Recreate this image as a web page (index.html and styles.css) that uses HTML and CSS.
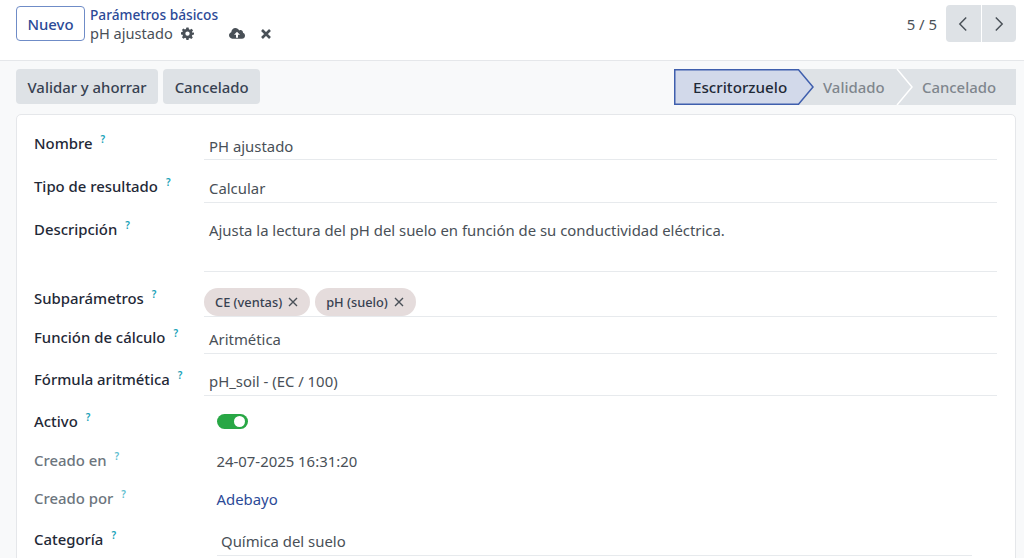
FILE: index.html
```html
<!DOCTYPE html>
<html lang="es">
<head>
<meta charset="utf-8">
<title>PH ajustado</title>
<link rel="stylesheet" href="styles.css">
</head>
<body>
<header class="topbar">
  <div class="top-left">
    <button class="btn-new">Nuevo</button>
    <div class="crumbs">
      <a class="crumb-link">Parámetros básicos</a>
      <div class="crumb-current">
        <span>pH ajustado</span>
        <svg class="ic ic-gear" viewBox="0 0 24 24"><path fill-rule="evenodd" d="M10 1h4l.7 3.2 1.9.8 2.8-1.8 2.8 2.8-1.8 2.8.8 1.9L24 10v4l-3.2.7-.8 1.9 1.8 2.8-2.8 2.8-2.8-1.8-1.9.8L14 24h-4l-.7-3.2-1.9-.8-2.8 1.8-2.8-2.8 1.8-2.8-.8-1.9L-.6 14v-4l3.2-.7.8-1.9L1.6 5.6l2.8-2.8 2.8 1.8 1.9-.8L10 1zm2 7.2a4 4 0 1 0 0 8 4 4 0 0 0 0-8z"/></svg>
        <svg class="ic ic-cloud" viewBox="0 0 24 18"><path fill-rule="evenodd" d="M9.5 0c2.6 0 4.8 1.4 5.9 3.6.6-.4 1.3-.6 2-.6 2 0 3.6 1.6 3.6 3.600l0 .7c1.800.6 3 2.300 3 4.200 0 2.500-2 4.500-4.500 4.500H5c-2.800 0-5-2.200-5-5 0-2.200 1.400-4.100 3.400-4.700C3.700 2.800 6.300 0 9.500 0zM12 5.500 7.500 10H10.500v4.500h3V10H16.500L12 5.500z"/></svg>
        <svg class="ic ic-x" viewBox="0 0 12 12"><path d="M2 2l8 8M10 2l-8 8"/></svg>
      </div>
    </div>
  </div>
  <div class="pager">
    <span class="pager-count">5 / 5</span>
    <div class="pager-btns">
      <button class="pager-btn"><svg viewBox="0 0 12 20"><path d="M10 2 2 10l8 8"/></svg></button>
      <button class="pager-btn"><svg viewBox="0 0 12 20"><path d="M2 2l8 8-8 8"/></svg></button>
    </div>
  </div>
</header>

<div class="statusbar">
  <div class="actions">
    <button class="btn-grey">Validar y ahorrar</button>
    <button class="btn-grey">Cancelado</button>
  </div>
  <svg class="steps-bg" viewBox="0 0 342 36" width="342" height="36">
    <path class="s-grey" d="M120 0H342V36H120l17-18z"/>
    <path class="s-sep" d="M223 0l15 18L223 36"/>
    <path class="s-on" d="M.75.750H124.500L139 18 124.500 35.250H.75z"/>
  </svg>
  <div class="steps">
    <span class="step step-on">Escritorzuelo</span>
    <span class="step step-2">Validado</span>
    <span class="step step-3">Cancelado</span>
  </div>
</div>

<main class="sheet">
  <div class="row r1"><div class="lab">Nombre<sup>?</sup></div><div class="val">PH ajustado</div></div>
  <div class="row r2"><div class="lab">Tipo de resultado<sup>?</sup></div><div class="val">Calcular</div></div>
  <div class="row r3"><div class="lab">Descripción<sup>?</sup></div><div class="val">Ajusta la lectura del pH del suelo en función de su conductividad eléctrica.</div></div>
  <div class="row r4"><div class="lab">Subparámetros<sup>?</sup></div>
    <div class="val tags">
      <span class="tag">CE (ventas)<svg viewBox="0 0 10 10"><path d="M1 1l8 8M9 1l-8 8"/></svg></span>
      <span class="tag">pH (suelo)<svg viewBox="0 0 10 10"><path d="M1 1l8 8M9 1l-8 8"/></svg></span>
    </div>
  </div>
  <div class="row r5"><div class="lab">Función de cálculo<sup>?</sup></div><div class="val">Aritmética</div></div>
  <div class="row r6"><div class="lab">Fórmula aritmética<sup>?</sup></div><div class="val">pH_soil - (EC / 100)</div></div>
  <div class="row r7"><div class="lab">Activo<sup>?</sup></div><div class="plain"><span class="toggle"><span class="knob"></span></span></div></div>
  <div class="row r8"><div class="lab muted">Creado en<sup>?</sup></div><div class="plain">24-07-2025 16:31:20</div></div>
  <div class="row r9"><div class="lab muted">Creado por<sup>?</sup></div><div class="plain link">Adebayo</div></div>
  <div class="row r10"><div class="lab">Categoría<sup>?</sup></div><div class="cat">Química del suelo</div></div>
</main>
</body>
</html>
```

FILE: styles.css
```css
* { box-sizing: border-box; }
html, body { margin: 0; height: 558px; overflow: hidden; }
body {
  background: #f8f9fa;
  color: #495057;
  font-family: "Noto Sans", "Open Sans", sans-serif;
  font-size: 14.9px;
}
button { font: inherit; cursor: pointer; }

.topbar {
  height: 61px;
  background: #fff;
  border-bottom: 1px solid #e5e7ea;
  padding: 5px 8px 0 16px;
  display: flex;
  justify-content: space-between;
  align-items: flex-start;
}
.top-left { display: flex; gap: 5px; }
.btn-new {
  width: 69px; height: 35px; margin-top: 1px;
  background: #fff;
  border: 1px solid #6f8cc7;
  border-radius: 4px;
  color: #2c4a97;
  font-weight: 500;
  padding: 0;
}
.crumbs { display: flex; flex-direction: column; line-height: 19px; }
.crumb-link { color: #2c4a97; font-weight: 500; font-size: 13.7px; }
.crumb-current { display: flex; align-items: center; height: 19px; color: #495057; font-size: 14.6px; }
.ic { display: block; fill: #495057; }
.ic-gear { width: 13px; height: 13px; margin-left: 8px; }
.ic-cloud { width: 16px; height: 12px; margin-left: 35px; }
.ic-x { width: 12px; height: 12px; margin-left: 15px; fill: none; stroke: #495057; stroke-width: 2.6; }

.pager { display: flex; align-items: center; gap: 9px; height: 37px; }
.pager-btns { display: flex; gap: 1px; }
.pager-btn {
  width: 34.5px; height: 37px; padding: 0;
  background: #dee2e6; border: 0;
  display: flex; align-items: center; justify-content: center;
}
.pager-btn:first-child { border-radius: 4px 0 0 4px; }
.pager-btn:last-child { border-radius: 0 4px 4px 0; }
.pager-btn svg { width: 10px; height: 16px; fill: none; stroke: #495057; stroke-width: 1.800; }

.statusbar {
  position: relative;
  height: 53px;
  padding: 8px 16px 0;
  display: flex;
  justify-content: space-between;
  align-items: flex-start;
}
.actions { display: flex; gap: 5px; }
.btn-grey {
  height: 35px; padding: 0 11.5px;
  background: #dee2e6; border: 0; border-radius: 4px;
  color: #374151; font-weight: 500;
}
.steps-bg { position: absolute; left: 674px; top: 8px; }
.s-grey { fill: #dee2e6; }
.s-sep { fill: none; stroke: #fff; stroke-width: 1.500; }
.s-on { fill: #d2d9ea; stroke: #3f5fad; stroke-width: 1.500; }
.steps { position: absolute; left: 674px; top: 8px; width: 342px; height: 35px; }
.step { position: absolute; top: 0; line-height: 36px; font-weight: 500; color: #7f868d; }
.step-on { left: 19px; color: #1f2937; font-size: 15.2px; }
.step-2 { left: 149px; }
.step-3 { left: 248px; }

.sheet {
  margin: 0 0 0 16px;
  width: 1000px;
  height: 460px;
  background: #fff;
  border: 1px solid #e5e7ea;
  border-radius: 5px 5px 0 0;
  padding: 0 0 0 17px;
}
.row { display: grid; grid-template-columns: 170px 793px; }
.lab { color: #1f2937; font-weight: 500; line-height: 20px; padding-top: 18px; }
.lab sup {
  color: #17a2b8; font-size: 10px; font-weight: 600;
  margin-left: 8px; line-height: 0; vertical-align: 6px;
}
.lab.muted { color: #6c757d; }
.lab.muted sup { color: #5fc0d0; }
.val {
  border-bottom: 1px solid #e7eaed;
  padding: 21px 0 0 5px;
  line-height: 20px;
  color: #495057;
}
.r1 { height: 45px; }
.r2 { height: 43px; }
.r3 { height: 69px; }
.r4 { height: 45px; }
.r5 { height: 37px; }
.r6 { height: 42px; }
.r1 .val { padding-top: 21px; }
.r2 .lab { padding-top: 16px; }
.r2 .val { padding-top: 18px; }
.r3 .lab { padding-top: 16px; }
.r3 .val { padding-top: 17px; }
.r4 .lab { padding-top: 16px; }
.r5 .lab { padding-top: 10px; }
.r5 .val { padding-top: 12px; }
.r6 .lab { padding-top: 15px; }
.r6 .val { padding-top: 17px; }
.val.tags { display: flex; gap: 5px; padding: 16px 0 0; align-items: flex-start; }
.tag {
  height: 28px; padding: 0 12px 0 11px;
  display: inline-flex; align-items: center; gap: 6px;
  background: #e5dcdc; border-radius: 14px;
  color: #374151; font-size: 12.800px; font-weight: 500;
}
.tag svg { width: 10px; height: 10px; fill: none; stroke: #495057; stroke-width: 1.400; }
.plain { padding-left: 12.5px; line-height: 20px; }
.link { color: #2c4a97; }
.r7 { height: 39px; }
.r7 .lab { padding-top: 15px; }
.r7 .plain { padding-top: 18px; }
.r8 { height: 38px; }
.r8 .lab { padding-top: 15px; }
.r8 .plain { padding-top: 16px; }
.r9 { height: 39px; }
.r9 .lab { padding-top: 15px; }
.r9 .plain { padding-top: 16px; }
.r10 .lab { padding-top: 17px; }
.cat {
  margin-left: 13px; width: 755px; height: 44px;
  padding: 19px 0 0 4px; line-height: 20px;
  border-bottom: 1px solid #e7eaed;
}
.toggle {
  display: block; width: 31px; height: 15px;
  border-radius: 8px; background: #28a745; position: relative;
}
.knob {
  position: absolute; right: 3px; top: 2px;
  width: 11px; height: 11px; border-radius: 50%; background: #fff;
}
```
